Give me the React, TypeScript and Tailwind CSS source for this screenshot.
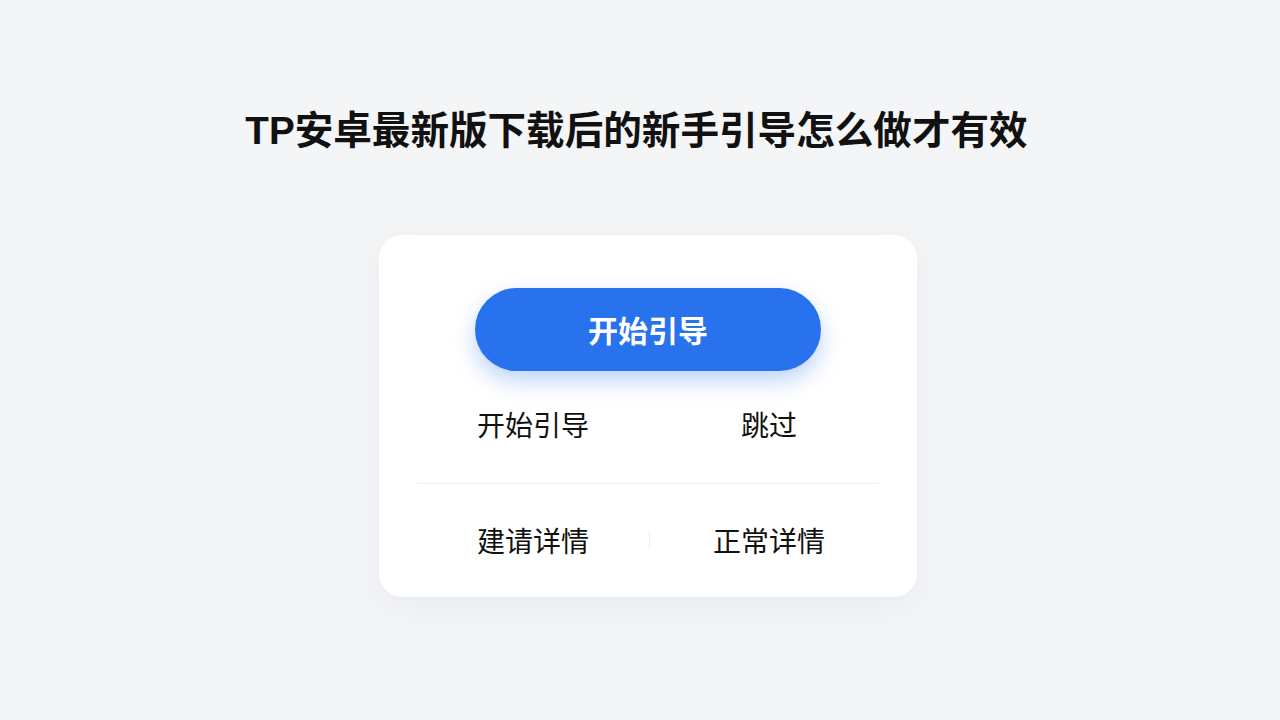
export default function App() {
  return (
    <main
      className="min-h-screen w-full bg-[#f3f5f7] flex flex-col items-center text-[#111111]"
      style={{ fontFamily: '"Noto Sans CJK SC", "Noto Sans", sans-serif' }}
    >
      <h1
        className="pt-[107px] mr-[7px] text-[38.6px] leading-[48px] font-bold"
        style={{ fontFamily: '"Liberation Sans", "Noto Sans CJK SC", sans-serif' }}
      >
        TP安卓最新版下载后的新手引导怎么做才有效
      </h1>

      <div className="mt-[80px] ml-[16px] w-[538px] rounded-[24px] bg-white shadow-[0_10px_36px_rgba(30,40,60,0.045)] flex flex-col items-center pt-[53px] pb-[37px]">
        <button className="w-[346px] h-[83px] rounded-full bg-[#2872ee] text-white text-[30px] font-semibold shadow-[0_10px_22px_rgba(40,114,238,0.3)]">
          开始引导
        </button>

        <div className="mt-[33px] w-[462px] flex items-center h-[40px] text-[28px] leading-[40px]">
          <div className="w-[232px] text-center">开始引导</div>
          <div className="flex-1 pl-[10px] text-center">跳过</div>
        </div>

        <div className="mt-[39px] w-[462px] h-px bg-[#eceef1]" />

        <div className="mt-[36px] w-[462px] flex items-center h-[40px] text-[28px] leading-[40px]">
          <div className="w-[232px] text-center">建请详情</div>
          <div className="w-px h-[16px] bg-[#eceef1]" />
          <div className="flex-1 pl-[9px] text-center">正常详情</div>
        </div>
      </div>
    </main>
  );
}
